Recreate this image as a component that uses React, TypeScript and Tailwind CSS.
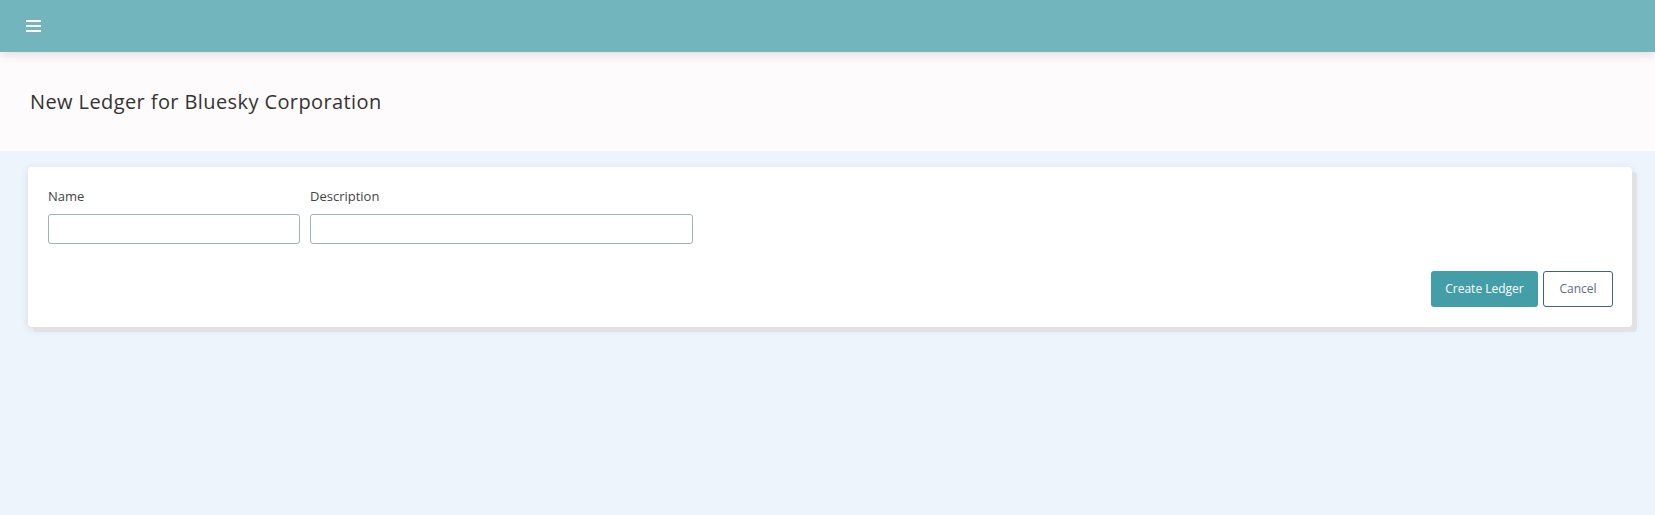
import React from "react";

export default function App() {
  return (
    <div className="min-h-[515px] w-full bg-[#edf4fb] font-['Open_Sans',sans-serif]">
      <header className="relative z-10 flex h-[52px] items-center bg-[#72b5bd] pl-[26px] shadow-[0_3px_10px_rgba(0,0,0,0.12)]">
        <div className="flex w-[15px] flex-col gap-[2.5px]">
          <span className="block h-[2.5px] w-full bg-white" />
          <span className="block h-[2.5px] w-full bg-white" />
          <span className="block h-[2.5px] w-full bg-white" />
        </div>
      </header>
      <section className="flex h-[99px] items-center bg-[#fdfbfb] pl-[30px]">
        <h1 className="text-[20px] leading-none text-[#333] tracking-[0.4px]">
          New Ledger for Bluesky Corporation
        </h1>
      </section>
      <main className="pt-[16px]">
        <div className="ml-[28px] mr-[23px] rounded-[4px] bg-white pl-[20px] pr-[19px] pt-[20px] pb-[20px] shadow-[5px_5px_0_#e2e2e4,0_2px_10px_rgba(0,0,0,0.10)]">
          <div className="flex gap-[10px]">
            <div className="flex w-[252px] flex-col">
              <label className="text-[13px] leading-[18px] text-[#444]">Name</label>
              <input className="mt-[9px] h-[30px] w-full rounded-[3px] border border-[#a3b0b6] bg-white outline-none" />
            </div>
            <div className="flex w-[383px] flex-col">
              <label className="text-[13px] leading-[18px] text-[#444]">Description</label>
              <input className="mt-[9px] h-[30px] w-full rounded-[3px] border border-[#a3b0b6] bg-white outline-none" />
            </div>
          </div>
          <div className="mt-[27px] flex justify-end gap-[5px]">
            <button className="h-[36px] w-[107px] rounded-[3px] bg-[#449ea8] text-[12px] text-white">
              Create Ledger
            </button>
            <button className="h-[36px] w-[70px] rounded-[3px] border border-[#46617f] bg-white text-[12px] text-[#5d6d82]">
              Cancel
            </button>
          </div>
        </div>
      </main>
    </div>
  );
}
